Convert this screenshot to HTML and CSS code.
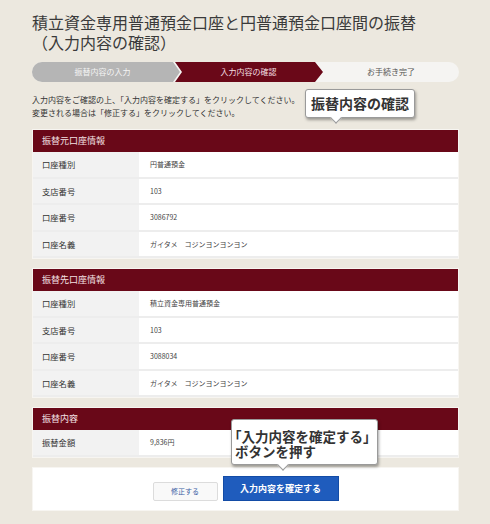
FILE: index.html
```html
<!DOCTYPE html>
<html lang="ja">
<head>
    <meta charset="UTF-8">
    <title>入力内容の確認</title>
    <link rel="stylesheet" href="styles.css">
</head>
<body>
    <div class="page">
        <h1 class="title">積立資金専用普通預金口座と円普通預金口座間の振替<br>（入力内容の確認）</h1>

        <ol class="steps">
            <li class="step step-done">振替内容の入力</li>
            <li class="step step-current">入力内容の確認</li>
            <li class="step step-todo">お手続き完了</li>
        </ol>

        <p class="intro">入力内容をご確認の上、「入力内容を確定する」をクリックしてください。<br>変更される場合は「修正する」をクリックしてください。</p>

        <section class="panel">
            <h2 class="panel-head">振替元口座情報</h2>
            <table class="info">
                <tbody>
                <tr><th>口座種別</th><td>円普通預金</td></tr>
                <tr><th>支店番号</th><td>103</td></tr>
                <tr><th>口座番号</th><td>3086792</td></tr>
                <tr><th>口座名義</th><td>ガイタメ　コジンヨンヨンヨン</td></tr>
                </tbody>
            </table>
        </section>

        <section class="panel">
            <h2 class="panel-head">振替先口座情報</h2>
            <table class="info">
                <tbody>
                <tr><th>口座種別</th><td>積立資金専用普通預金</td></tr>
                <tr><th>支店番号</th><td>103</td></tr>
                <tr><th>口座番号</th><td>3088034</td></tr>
                <tr><th>口座名義</th><td>ガイタメ　コジンヨンヨンヨン</td></tr>
                </tbody>
            </table>
        </section>

        <section class="panel">
            <h2 class="panel-head">振替内容</h2>
            <table class="info">
                <tbody>
                <tr><th>振替金額</th><td>9,836円</td></tr>
                </tbody>
            </table>
        </section>

        <div class="actions">
            <button class="btn btn-back" type="button">修正する</button>
            <button class="btn btn-submit" type="button">入力内容を確定する</button>
        </div>

        <!-- 注釈の吹き出し -->
        <div class="callout callout-check">振替内容の確認</div>
        <div class="callout callout-submit">「入力内容を確定する」<br>ボタンを押す</div>
    </div>
</body>
</html>
```

FILE: styles.css
```css
body {
    margin: 0;
    background: #ece8df;
    font-family: "Noto Sans CJK JP", "Noto Sans", sans-serif;
    color: #333;
}

.page {
    position: relative;
    width: 427px;
    padding: 13px 0 13px 32px;
}

.title {
    margin: 0;
    font-size: 16px;
    font-weight: normal;
    line-height: 19.5px;
    color: #3a3a3a;
}

/* ステップバー */
.steps {
    display: flex;
    height: 20px;
    margin: 10px 0 0;
    padding: 0;
    list-style: none;
    border-radius: 10px;
    overflow: hidden;
    background: #f5f4f2;
    font-size: 8px;
    line-height: 20px;
}

.step {
    box-sizing: border-box;
    text-align: center;
}

.step-done {
    flex: 0 0 148px;
    padding-right: 7px;
    background: #b5b5b5;
    color: #f4f4f4;
    clip-path: polygon(0 0, 141px 0, 148px 50%, 141px 100%, 0 100%);
}

.step-current {
    flex: 0 0 148px;
    margin-left: -5px;
    padding: 0 8px 0 7px;
    background: #6a0818;
    color: #f2dfe2;
    clip-path: polygon(0 0, 140px 0, 148px 50%, 140px 100%, 0 100%, 7px 50%);
}

.step-todo {
    flex: 1;
    color: #555;
}

.intro {
    margin: 11px 0 10px;
    font-size: 8px;
    line-height: 13px;
    color: #333;
}

/* 情報パネル */
.panel {
    margin-bottom: 9px;
    background: #fff;
    border: 1px solid #f7f5f1;
}

.panel-head {
    margin: 0;
    height: 22px;
    padding-left: 9px;
    background: #690818;
    color: #f3e0e3;
    font-size: 9px;
    font-weight: normal;
    line-height: 22px;
}

.info {
    width: 100%;
    border-collapse: collapse;
}

.info th, .info td {
    height: 24.5px;
    padding: 0;
    border-bottom: 2px solid #ededed;
    text-align: left;
    font-weight: normal;
}

.info th {
    width: 97px;
    padding-left: 9px;
    background: #f2f2f2;
    font-size: 8.3px;
    color: #333;
}

.info td {
    padding-left: 11px;
    font-size: 7px;
    color: #444;
}

.actions {
    display: flex;
    justify-content: center;
    align-items: flex-end;
    gap: 5px;
    padding: 8px 0 9px;
    background: #fff;
    border: 1px solid #f7f5f1;
}

.btn {
    padding: 0;
    font-family: inherit;
    cursor: pointer;
}

.btn-back {
    width: 65px;
    height: 19px;
    background: #f9f9f9;
    border: 1px solid #dcdcdc;
    border-radius: 2px;
    color: #3d63a5;
    font-size: 7px;
}

.btn-submit {
    width: 116px;
    height: 25px;
    background: #1f5cbd;
    border: 1px solid #134ca6;
    color: #fff;
    font-size: 9px;
    font-weight: bold;
}

/* 吹き出し */
.callout {
    position: absolute;
    box-sizing: border-box;
    background: #fff;
    border: 1px solid #9a9a9a;
    border-radius: 3px;
    box-shadow: 1px 2px 3px rgba(0, 0, 0, 0.35);
    color: #333;
    font-weight: bold;
}

.callout::after {
    content: "";
    position: absolute;
    bottom: -5px;
    width: 7px;
    height: 7px;
    background: #fff;
    border-right: 1px solid #9a9a9a;
    border-bottom: 1px solid #9a9a9a;
    transform: rotate(45deg);
}

.callout-check {
    left: 305px;
    top: 89px;
    width: 110px;
    height: 29px;
    font-size: 14px;
    line-height: 27px;
    text-align: center;
}

.callout-check::after {
    left: 26px;
}

.callout-submit {
    left: 231px;
    top: 419px;
    width: 147px;
    height: 46px;
    padding: 9px 0 0 3px;
    font-size: 13.5px;
    line-height: 15px;
    text-indent: -7px;
}

.callout-submit::after {
    left: 47px;
}
```
